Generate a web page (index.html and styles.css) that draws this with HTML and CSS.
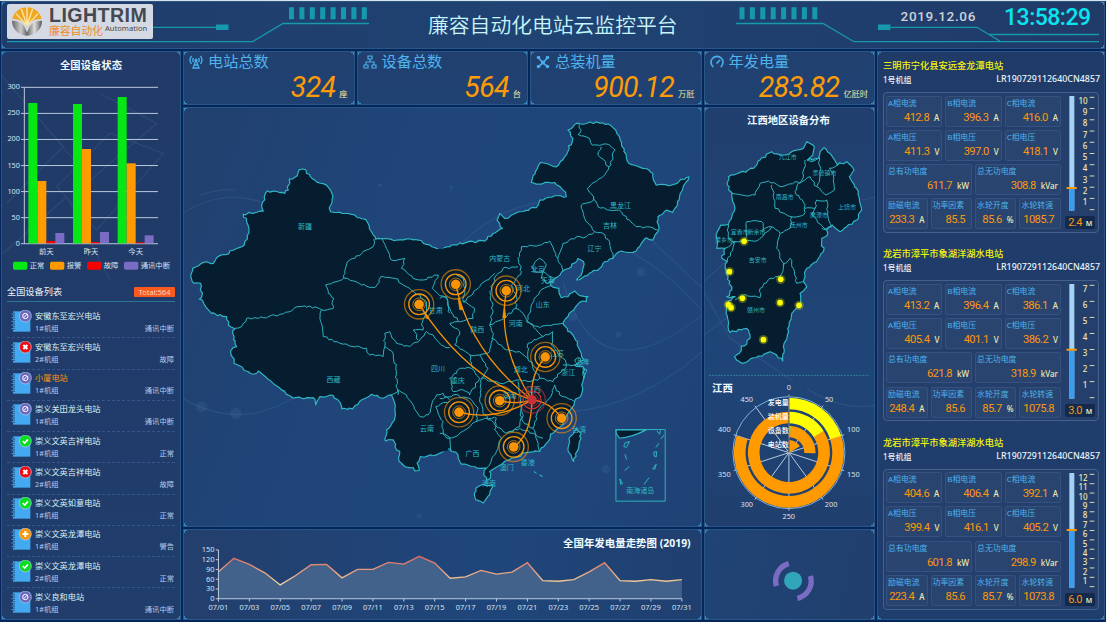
FILE: index.html
```html
<!DOCTYPE html>
<html lang="zh-CN">
<head>
<meta charset="utf-8">
<title>廉容自动化电站云监控平台</title>
<link rel="stylesheet" href="styles.css">
</head>
<body>
<main class="board">
  <header class="panel header">
    <svg class="header-lines" viewBox="0 0 1103 48">
      <g fill="none" stroke="#1799ad" stroke-width="1.3">
        <path d="M6 40.7H251.500L282 22.500H368"/>
        <path d="M6 33.700H105L124 26.300H215"/>
        <path d="M735 22.500H822L853 40.700H1098"/>
        <path d="M890 26.300H976L1000 40.700M988 33.500H1098"/>
      </g>
      <g fill="#1799ad">
        <rect x="215" y="23.500" width="12.500" height="5.500"/>
        <rect x="877" y="23.500" width="12.500" height="5.500"/>
      </g>
      <path d="M290.500 6.300V18.300M300.900 6.300V18.300M311.300 6.300V18.300M321.700 6.300V18.300M332.100 6.300V18.300M342.500 6.300V18.300M352.900 6.300V18.300M363.300 6.300V18.300M741 6.300V18.300M751.400 6.300V18.300M761.800 6.300V18.300M772.200 6.300V18.300M782.600 6.300V18.300M793 6.300V18.300M803.400 6.300V18.300M813.800 6.300V18.300" stroke="#1799ad" stroke-width="5"/>
    </svg>
    <div class="logo">
      <svg class="logo-mark" viewBox="0 0 90 90">
        <defs><linearGradient id="silver"><stop offset="0" stop-color="#666"/><stop offset=".3" stop-color="#ccc"/><stop offset=".5" stop-color="#666"/><stop offset=".75" stop-color="#ddd"/><stop offset="1" stop-color="#555"/></linearGradient></defs>
        <path d="M1 36A45 45 0 0 1 89 36Q58 34 45 60Q32 34 1 36Z" fill="#efa722"/>
        <path d="M45 56L12 20M45 56L28 5M45 56V0M45 56L62 5M45 56L78 20" stroke="#fbe7ac" stroke-width="4"/>
        <path d="M0 41Q34 39 45 76Q56 39 90 41A45 45 0 0 1 0 41Z" fill="url(#silver)"/>
      </svg>
      <div class="logo-text"><b>LIGHTRIM</b><div class="logo-sub"><span>廉容自动化</span><em>Automation</em></div></div>
    </div>
    <h1>廉容自动化电站云监控平台</h1>
    <div class="time"><span class="date">2019.12.06</span><span class="clock">13:58:29</span></div>
  </header>

  <aside class="panel left">
    <svg class="bars" id="bars" viewBox="3 3 540 690"></svg>
    <div class="list-head"><span>全国设备列表</span><span class="total">Total:564</span></div>
    <ul class="devices" id="devices"></ul>
  </aside>

  <section class="panel stat">
    <div class="stat-name"><svg viewBox="0 0 14 14"><g fill="none" stroke="#4aaeea" stroke-width="1.300"><path d="M4.500 3Q3 5 4.500 7M9.500 3Q11 5 9.500 7M2.500 1Q-.5 5 2.500 9M11.500 1Q14.500 5 11.500 9M7 5L4 13H10L7 5M5.500 10H8.500"/></g><circle cx="7" cy="5" r="1.600" fill="#4aaeea"/></svg>电站总数</div>
    <div class="stat-value"><b>324</b><i>座</i></div>
  </section>
  <section class="panel stat">
    <div class="stat-name"><svg viewBox="0 0 14 14"><path d="M5 1H9V4H5ZM1 10H5V13H1ZM9 10H13V13H9ZM7 4V7M3 10V7H11V10" fill="none" stroke="#4aaeea" stroke-width="1.200"/></svg>设备总数</div>
    <div class="stat-value"><b>564</b><i>台</i></div>
  </section>
  <section class="panel stat">
    <div class="stat-name"><svg viewBox="0 0 14 14"><path d="M2.500 2.500Q6 8 11.500 11.500M11.500 2.500Q8 8 2.500 11.500" fill="none" stroke="#4aaeea" stroke-width="1.500"/><g fill="#4aaeea"><circle cx="2.500" cy="2.500" r="1.800"/><circle cx="11.500" cy="2.500" r="1.800"/><circle cx="2.500" cy="11.500" r="1.800"/><circle cx="11.500" cy="11.500" r="1.800"/><circle cx="7" cy="7.500" r="2"/></g></svg>总装机量</div>
    <div class="stat-value"><b>900.12</b><i>万瓩</i></div>
  </section>
  <section class="panel stat">
    <div class="stat-name"><svg viewBox="0 0 14 14"><path d="M3.300 12A6 6 0 1 1 10.700 12M6.500 8.500L10 5" fill="none" stroke="#4aaeea" stroke-width="1.700"/></svg>年发电量</div>
    <div class="stat-value"><b>283.82</b><i>亿瓩时</i></div>
  </section>

  <section class="panel map"><svg id="china" viewBox="9 6 1557 1260"></svg></section>
  <section class="panel region"><svg id="region" viewBox="12 6 514 1260"></svg></section>
  <section class="panel trend"><svg id="trend" viewBox="9 12 1536 270"></svg></section>
  <section class="panel spin">
    <svg viewBox="12 477 514 273">
      <circle cx="279" cy="632" r="27" fill="#31a5ba"/>
      <path d="M229 648A53 53 0 0 1 266 581M331 618A53 53 0 0 1 292 685" fill="none" stroke="#7a6cc3" stroke-width="16"/>
    </svg>
  </section>
  <aside class="panel right" id="stations"></aside>
</main>
<script src="app.js"></script>
</body>
</html>
```

FILE: styles.css
```css
* { box-sizing: border-box; }
body {
  margin: 0; width: 1106px; height: 622px; overflow: hidden;
  background: #03265d; border-top: 1px solid #d8e4e8;
  font-family: "Noto Sans", "Noto Sans CJK SC", sans-serif; color: #e8f4fa;
}
.board {
  display: grid; padding-left: 1px; gap: 2px; width: 1105px;
  grid-template-columns: 180px repeat(4, 171.5px) 228px;
  grid-template-rows: 48px 54px 420px 91px;
}
.panel {
  --c: #3787b8;
  min-width: 0; min-height: 0; overflow: hidden; position: relative;
  background:
    linear-gradient(var(--c), var(--c)) 0 0 / 4px 2px, linear-gradient(var(--c), var(--c)) 0 0 / 2px 4px,
    linear-gradient(var(--c), var(--c)) 100% 0 / 4px 2px, linear-gradient(var(--c), var(--c)) 100% 0 / 2px 4px,
    linear-gradient(var(--c), var(--c)) 0 100% / 4px 2px, linear-gradient(var(--c), var(--c)) 0 100% / 2px 4px,
    linear-gradient(var(--c), var(--c)) 100% 100% / 4px 2px, linear-gradient(var(--c), var(--c)) 100% 100% / 2px 4px,
    var(--fill, linear-gradient(#213f6f, #20406f));
  background-repeat: no-repeat;
  box-shadow: inset 0 0 0 1px #2a5685;
}
.panel > svg { display: block; width: 100%; height: 100%; }
.header { grid-column: 1 / -1; display: flex; align-items: center; --fill: linear-gradient(90deg, #203c6a, #1f4373 50%, #203a68); }
.header > .header-lines { position: absolute; left: 0; top: 0; width: 1103px; height: 48px; }
.logo {
  position: relative; margin: -7px 0 0 6px; width: 146px; height: 35px; border-radius: 2px;
  background: rgba(222, 226, 235, .95); display: flex; align-items: center; padding-left: 5px; gap: 7px;
}
.logo-mark { width: 30px; height: 30px; flex: none; }
.logo-text b { display: block; font: bold 19.600px/18px "Liberation Sans", sans-serif; color: #444850; letter-spacing: .45px; margin-top: -1px; }
.logo-sub { display: flex; line-height: 12px; height: 13px; white-space: nowrap; }
.logo-sub span { font-size: 10.800px; color: #ef8b28; line-height: 14px; }
.logo-sub em { font: 7.600px/8px "Noto Sans", sans-serif; color: #444; margin-left: 2px; }
h1 {
  position: relative; margin: 0 0 0 275px; font-size: 20.800px; line-height: 28px; font-weight: 350; color: #c6f5fb; white-space: nowrap;
}
.time { position: relative; margin-left: auto; display: flex; gap: 28px; margin-right: 14px; margin-top: -14px; align-items: center; font-family: Roboto, sans-serif; }
.date { font-size: 13.500px; line-height: 16px; color: #cdd3d8; letter-spacing: .65px; margin-top: -4px; font-weight: 500; }
.clock { font-size: 23px; line-height: 24px; font-weight: 500; color: #0be4ef; letter-spacing: -.5px; width: 87px; }

.left { grid-row: 2 / 5; --fill: linear-gradient(#213a67, #203d6c); }
.left > .bars { height: 230px; }
.list-head { display: flex; justify-content: space-between; align-items: center; height: 21px; margin: 0 6px; border-bottom: 1px solid #2b7793; font-size: 9.200px; }
.list-head span { white-space: nowrap; }
.list-head .total { background: #fb591d; font-size: 7.500px; line-height: 10px; width: 41px; text-align: center; border-radius: 1px; color: #f5d9c0; margin-top: 2px; }
.devices { list-style: none; margin: 5px 6px 0; padding: 0; }
.devices li { display: flex; height: 31.250px; border-bottom: 1px dashed #36558a; padding: 2.500px 1px 0 4px; }
.devices li:last-child { border: 0; }
.devices svg { width: 22px; height: 24px; flex: none; }
.dev { flex: 1; margin-left: 2px; font-size: 8.200px; line-height: 13px; margin-top: -.8px; color: #d9f2f5; white-space: nowrap; }
.dev.warn b { color: #fb9310; }
.dev b { font-weight: 400; display: block; }
.dev div { display: flex; justify-content: space-between; font-size: 7.300px; line-height: 12px; color: #b3cbef; }

.stat { --fill: linear-gradient(#21406f, #1f4273); padding: 1px 7px 0 6px; }
.stat-name { display: flex; gap: 5px; align-items: center; color: #4eb3ef; font-size: 15.200px; line-height: 19px; white-space: nowrap; }
.stat-name svg { width: 14px; height: 14px; }
.stat-value { display: flex; justify-content: flex-end; align-items: baseline; gap: 4px; height: 29px; margin-top: 1px; color: #fd9b07; }
.stat-value b { font: italic 400 28.500px/32px Roboto, sans-serif; letter-spacing: -.7px; }
.stat-value i { font-style: normal; font-size: 8.200px; color: #eeeaa5; }

.map { grid-column: 2 / 5; --fill: linear-gradient(110deg, #21406e, #1f4579 35%, #1f467b 75%, #1f4275); }
.region { --fill: linear-gradient(#213f6e, #1f4578 60%, #203f6e); }
.trend { grid-column: 2 / 5; --fill: linear-gradient(90deg, #233f6d, #1f467b 60%, #203f6f); }
.spin { --fill: linear-gradient(100deg, #1f4475, #213f6e); }
.land { fill: #061d2f; stroke: #2fb8c5; stroke-width: 3.500; stroke-linejoin: round; }
.border { fill: none; stroke: #2fb3bf; stroke-width: 3; }
.deco { fill: none; stroke: #6fa3cc; stroke-opacity: .13; stroke-width: 4; }
.place { fill: #2fb8c5; font-size: 21px; text-anchor: middle; }
.place.small { font-size: 18px; }
.route { fill: none; stroke: #f49208; stroke-width: 4; }
.axis { fill: none; stroke: #b9cade; stroke-width: 3; }
.tick { fill: #d7e3f0; font-size: 22px; }
.tick.ring { fill: #fff; font-size: 21px; font-weight: 500; }
.mid { text-anchor: middle; }
.end { text-anchor: end; }
.title { fill: #f0fbff; font-size: 31px; font-weight: 700; }

.right { grid-column: 6; grid-row: 2 / 5; --fill: linear-gradient(#213b69, #1f3e6d); padding: 8px 6px 0; }
.station { height: 188.300px; }
.station h2 { margin: 0; font-size: 9.250px; line-height: 14px; font-weight: 500; color: #f5f40e; white-space: nowrap; }
.station .sub { display: flex; justify-content: space-between; font-size: 8px; line-height: 13px; font-weight: 500; white-space: nowrap; margin-bottom: 6px; }
.sub span + span { font-size: 8.850px; margin-right: -1px; }
.box { display: flex; gap: 4px; width: 215.500px; height: 141px; border: 1px solid #45618a; border-radius: 4px; padding: 2px; background: #243f6b; }
.cells { display: grid; width: 175px; grid-template-columns: repeat(12, 1fr); grid-template-rows: repeat(4, 31px); row-gap: 3.300px; column-gap: 3px; margin-top: .5px; }
.cell { grid-column: span 4; min-width: 0; border: 1px solid #35517f; border-radius: 2px; background: #29456f; padding: 0 2px 0 1px; white-space: nowrap; }
.cell.half { grid-column: span 6; }
.cell.quarter { grid-column: span 3; }
.cell span { display: block; font-size: 7.900px; line-height: 12px; color: #4bb1ef; }
.read { display: flex; justify-content: flex-end; align-items: baseline; gap: 5px; line-height: 17px; color: #fd960c; font-family: Roboto, sans-serif; font-size: 11.200px; letter-spacing: -.6px; }
.read u { text-decoration: none; font: 500 8px/10px "Noto Sans", sans-serif; color: #eeeab3; letter-spacing: 0; }
.quarter .read.none { padding-right: 4px; }
.gauge { width: 30px; }
.gauge svg { display: block; width: 30px; height: 121px; }
.level { display: flex; justify-content: center; align-items: baseline; gap: 4px; background: #15294d; border-radius: 2px; height: 13px; font: 11px/13px Roboto, sans-serif; color: #fd960c; letter-spacing: -.6px; }
.level u { text-decoration: none; font: 600 7px/8px "Noto Sans", sans-serif; color: #eeeab3; }
.scale { fill: #eeeab3; font-size: 24px; font-weight: 500; text-anchor: middle; }
```

FILE: app.js
```js
const $ = id => document.getElementById(id);

// Irregular border lines: every long segment is split and shifted a little.
let seed = 7;
const rnd = () => { seed = (seed * 16807) % 2147483647; return seed / 2147483647 - 0.5; };
function rough(str, amp = 7) {
  const closed = /z$/.test(str);
  const n = str.replace('z', '').trim().split(/[\s,]+/).map(Number);
  const p = [];
  for (let i = 0; i < n.length; i += 2) p.push([n[i], n[i + 1]]);
  if (closed) p.push(p[0]);
  let d = 'M' + p[0];
  for (let i = 1; i < p.length; i++) {
    const [a, b] = [p[i - 1], p[i]];
    const k = Math.max(1, Math.round(Math.hypot(b[0] - a[0], b[1] - a[1]) / 9));
    for (let j = 1; j < k; j++) {
      d += 'L' + (a[0] + (b[0] - a[0]) * j / k + rnd() * amp).toFixed(1) + ' ' + (a[1] + (b[1] - a[1]) * j / k + rnd() * amp).toFixed(1);
    }
    d += 'L' + b;
  }
  return d + (closed ? 'Z' : '');
}
const paths = (cls, list) => list.map(s => `<path class="${cls}" d="${rough(s)}"/>`).join('');
const label = (x, y, t, cls = 'place') => `<text class="${cls}" x="${x}" y="${y + 8}">${t}</text>`;

// Equipment status bars
let out = '<path class="deco" d="M3 75L190 290L20 460M60 140L230 340M170 410L330 250L490 310L290 540L170 410M300 130L470 220L260 400M10 610L200 440L330 690"/>';
out += label(273, 48, '全国设备状态', 'title mid');
[300, 250, 200, 150, 100, 50, 0].forEach((v, i) => {
  const y = 112 + i * 78.2;
  out += `<path class="axis" d="M63 ${y}H474"/>` + label(60, y - 2, v, 'tick end');
});
out += '<path class="axis" d="M73 112V581"/>';
const barColors = ['#06e816', '#ff9a00', '#fb0000', '#7a6cc3'];
[[85, '前天', [159, 393, 573, 549]], [219, '昨天', [162, 297, 576, 546]], [353, '今天', [141, 340, 577, 556]]].forEach(([x, name, ys]) => {
  ys.forEach((y, i) => { out += `<rect x="${x + i * 27}" y="${y}" width="27" height="${580 - y}" fill="${barColors[i]}"/>`; });
  out += label(x + 54, 603, name, 'tick mid');
});
[[39, '正常'], [150, '报警'], [261, '故障'], [372, '通讯中断']].forEach(([x, t], i) => {
  out += `<rect x="${x}" y="635" width="43" height="24" rx="5" fill="${barColors[i]}"/>` + label(x + 50, 646, t, 'tick');
});
$('bars').innerHTML = out;

// Device list
const marks = {
  '通讯中断': ['#6c68c0', '<circle cx="43" cy="17" r="8"/><path d="M38 22L48 12"/>'],
  '故障': ['#f00a14', '<path d="M37 11L49 23M49 11L37 23" stroke-width="6"/>'],
  '正常': ['#08dd20', '<path d="M35 17L41 23L51 12" stroke-width="5"/>'],
  '警告': ['#fb9608', '<path d="M43 8V26M34 17H52" stroke-width="6"/>']
};
$('devices').innerHTML = [
  ['安徽东至宏兴电站', 1, '通讯中断'], ['安徽东至宏兴电站', 2, '故障'], ['小厦电站', 1, '通讯中断'], ['崇义关田龙头电站', 1, '通讯中断'],
  ['崇义文英吉祥电站', 1, '正常'], ['崇义文英吉祥电站', 2, '故障'], ['崇义文英如意电站', 1, '正常'], ['崇义文英龙潭电站', 1, '警告'],
  ['崇义文英龙潭电站', 2, '正常'], ['崇义良和电站', 1, '通讯中断']
].map(([name, no, st]) => `<li><svg viewBox="0 0 66 72"><path d="M6 4H58V65H6Z" fill="#43aaf1"/><path d="M1 12H12M1 23H12M1 34H12M1 45H12M1 56H12" stroke="#203c6a" stroke-width="7"/><path d="M2 12H12M2 23H12M2 34H12M2 45H12M2 56H12" stroke="#43aaf1" stroke-width="3"/><circle cx="43" cy="18" r="18" fill="${marks[st][0]}" stroke="#b7cfe8" stroke-width="2"/><g fill="none" stroke="#fff" stroke-width="3" transform="translate(0 1)">${marks[st][1]}</g></svg><div class="dev${name === '小厦电站' ? ' warn' : ''}"><b>${name}</b><div><span>${no}#机组</span><span>${st}</span></div></div></li>`).join('');

// Country map: western half and eastern half (shifted by 780 units)
out = '<path class="deco" d="M0 330Q120 250 240 290M0 875Q170 980 340 880M60 270Q120 250 165 255M850 410Q1000 270 1180 290M1180 920Q1390 900 1580 730M1150 530Q1250 890 1580 620M1310 420Q1450 480 1580 630M1420 410L1580 560"/>';
out += '<g fill="#6fa3cc" fill-opacity=".1"><circle cx="65" cy="905" r="17"/><circle cx="168" cy="925" r="17"/><circle cx="1384" cy="501" r="13"/><circle cx="1180" cy="636" r="13"/><circle cx="1279" cy="1093" r="13"/><circle cx="718" cy="1233" r="8"/><circle cx="815" cy="247" r="6"/><circle cx="1316" cy="689" r="8"/><circle cx="601" cy="240" r="6"/></g>';
out += paths('land', ['810,437 770,430 740,418 715,405 690,401 650,405 607,401 587,402 575,380 562,350 540,338 515,328 452,320 448,308 457,290 456,265 440,240 405,225 380,205 378,194 357,194 352,212 328,222 325,255 315,265 262,257 245,305 250,318 190,328 200,350 207,382 193,420 110,458 100,475 80,470 38,490 32,512 42,535 62,535 66,570 58,582 95,625 140,635 145,660 165,672 158,685 170,725 152,738 162,775 220,808 235,798 300,850 340,880 400,878 408,900 420,875 460,872 482,895 486,912 518,912 545,885 575,868 610,880 635,870 643,890 645,940 620,975 617,1008 640,1005 650,1035 660,1040 658,1070 675,1085 700,1088 705,1098 718,1097 712,1075 722,1055 770,1050 790,1040']);
out += '<g transform="translate(780 0)">' + paths('land', [
  '0,434 30,425 80,412 135,408 160,385 188,370 172,345 180,325 195,340 240,320 290,308 300,285 345,272 380,275 378,262 345,232 290,237 275,232 302,172 350,185 375,155 400,100 385,75 405,58 440,55 470,50 515,62 540,95 568,175 620,190 640,205 650,240 695,240 748,215 730,250 720,275 700,322 680,315 655,335 655,380 640,405 620,398 600,425 580,442 545,438 520,460 490,475 480,490 410,525 428,500 432,470 415,460 395,485 370,498 345,520 330,530 335,542 358,550 365,578 385,575 405,558 420,572 445,575 440,590 420,592 395,620 370,655 400,690 425,745 432,765 405,780 430,785 435,810 430,830 425,870 405,890 385,925 370,960 340,985 300,1040 270,1042 215,1060 165,1090 150,1100 152,1120 140,1128 133,1105 140,1090 95,1085 65,1078 55,1050 35,1040 20,1030 0,1045',
  '108,1150 130,1138 158,1140 150,1170 130,1195 108,1185 104,1165z', '410,972 425,985 418,1020 402,1070 385,1035 388,1000z']) + '</g>';
out += '<path d="M760 434L805 428V1036L760 1045Z" fill="#061d2f"/>';
out += paths('border', [
  '165,670 185,665 200,640 250,638 300,628 330,620 345,608 390,603 425,614 458,612 462,580 445,565 437,540 492,519 503,470 525,460 560,435 580,425 582,402',
  '492,519 545,540 585,548 603,515 645,520 680,545 720,570 740,590 740,620 725,660 730,675 700,675 715,705',
  '607,401 620,430 635,465 675,460 665,490 700,520 730,525 775,510 758,550 780,572 800,580 810,625',
  '425,614 420,640 430,695 480,715 560,730 570,750 610,755 615,725 615,685 630,680 650,715 690,725 720,705 740,680 760,690 785,720 810,728',
  '615,725 640,745 648,790 652,850 655,870', '635,870 655,855 680,870 720,935 745,930 770,870 790,865 810,885', '810,890 768,905 775,925 790,950 790,985 812,1000']);
out += '<g transform="translate(780 0)">' + paths('border', [
  '418,58 425,75 415,88 450,100 458,120 508,118 527,135 508,185 490,215 443,250 462,275 455,290 425,300', '485,125 475,150 490,162 508,185',
  '462,275 475,305 510,315 540,315 570,345 590,365 625,365 655,375', '425,300 435,340 465,380 490,385 510,410 520,460',
  '465,380 440,395 410,395 370,415 355,460 370,498', '355,460 330,408 300,420 245,425 235,460 245,500 215,540 230,575 228,610 195,640 150,660 160,600 150,560 170,510 190,490 235,485',
  '275,485 300,460 320,480 310,500 285,500z', '310,500 335,515 325,535 305,520z', '165,505 120,545 70,590 105,610 100,640 55,650 30,655 60,680 45,720 90,750 120,750 150,740 160,690 150,660',
  '50,510 70,520 75,550 70,590', '0,580 20,575 30,610 55,650', '155,700 200,735 240,740 265,760 265,715 310,695 270,655 250,625 228,610', '260,650 275,600 300,560 335,542', '260,650 300,668 370,655',
  '310,695 340,680 335,720 370,760 380,785 340,830 300,820 265,760', '370,780 405,780', '120,750 145,790 125,820 180,835 240,825 265,830 300,820',
  '30,820 60,790 95,790 120,820 90,870 70,855 40,860z', '90,750 100,790', '125,820 120,880 135,930 165,960 200,985 240,965 245,900 235,830',
  '245,900 250,950 280,970 300,910 330,880 345,840 360,870 405,890', '280,970 300,1040', '0,880 40,870 90,880 115,910 110,950 60,985 30,1000 0,985', '30,1000 35,1040',
  '110,950 135,940 170,940 165,975 185,1000 170,1040 140,1090', '200,985 240,970 280,985 310,1000',
  '405,765 415,758 430,775 418,785z', '430,790 442,795 434,820z', '283,1100 290,1105z', '300,1110 308,1115z']);
out += '<path class="land" d="M529 975H620Q575 998 540 1000L530 985Z"/><path class="border" stroke-width="4" d="M529 974H677V1189H529ZM555 1015L570 1010L560 1028L553 1025ZM556 1048L561 1064M555 1097L569 1085M541 1122L549 1136L543 1138ZM613 1139L629 1118M639 1092L650 1078L646 1093ZM643 1042L651 1040L650 1056L644 1054ZM649 1028L658 1015M652 978L660 988L663 977M664 1003L674 990"/>';
[[543, 301, '黑龙江'], [511, 362, '吉林'], [465, 430, '辽宁'], [180, 461, '内蒙古'], [295, 492, '北京'], [325, 527, '天津'], [250, 551, '河北'], [309, 597, '山东'], [228, 656, '河南'], [113, 673, '陕西'], [352, 744, '江苏'], [243, 794, '湖北'], [386, 803, '浙江'], [54, 826, '重庆'], [282, 853, '江西'], [210, 870, '湖南'], [418, 972, '台湾'], [98, 1044, '广西'], [264, 1072, '香港'], [201, 1088, '澳门'], [148, 1134, '海南'], [602, 1158, '南海诸岛'], [427, 770, '上海'],
 [-405, 364, '新疆'], [-319, 822, '西藏'], [-38, 971, '云南'], [-5, 789, '四川'], [-12, 615, '甘肃']].forEach(a => { out += label(...a); });
out += '<path class="route" d="M277 885Q80 820 -62 598M277 885Q90 740 48 538M277 885Q170 720 200 557M277 885Q270 810 317 756M277 885Q230 900 180 887M277 885Q170 950 58 922M277 885Q330 890 366 940M277 885Q275 990 222 1026"/>';
out += '<path d="M-50 618L-38 642L-32 638ZM55 580L60 614L70 614ZM194 605L189 638L199 638Z" fill="#f49208" stroke="#f49208" stroke-width="2"/>';
[[-62, 598], [48, 538], [200, 557], [317, 756], [180, 887], [58, 922], [366, 940], [222, 1026], [277, 885]].forEach(([x, y], i) => {
  const c = i === 8 ? '#c93138' : '#f89406';
  out += `<g fill="none" stroke="${c}"><circle cx="${x}" cy="${y}" r="14" fill="${c}"/><circle cx="${x}" cy="${y}" r="19" stroke-width="2"/><circle cx="${x}" cy="${y}" r="${i === 8 ? 27 : 31}" stroke-width="4"/><circle cx="${x}" cy="${y}" r="${i === 8 ? 40 : 44}" stroke-width="4" stroke-opacity=".6"/></g>`;
});
$('china').innerHTML = out + '</g>';

// Province map and polar chart
out = '<path class="deco" d="M0 540L120 430M0 700L180 560M0 540L90 700L280 830M485 285L540 275M320 850Q420 920 540 900"/>' + label(265, 50, '江西地区设备分布', 'title mid');
out += paths('land', ['320,110 343,125 338,150 322,165 355,160 360,140 372,128 390,145 412,180 440,170 462,195 448,215 475,260 485,315 470,345 420,380 397,360 380,375 382,390 365,400 370,440 350,470 320,490 310,530 320,545 300,565 300,600 275,625 262,690 250,725 248,768 210,740 125,775 103,755 150,700 140,670 90,683 78,625 78,595 105,575 80,575 95,555 75,490 82,470 65,460 75,430 50,430 48,390 62,360 85,358 105,310 95,270 82,240 85,215 160,190 180,165 215,140 250,150 310,130z']);
out += paths('border', ['95,265 125,270 165,270 180,235 205,228 240,245 285,230 300,235 310,210 315,165', '215,240 225,290 225,310 275,335 310,330 315,300 285,260 295,235', '315,310 345,310 350,285 380,285 385,340 395,365 375,372 335,330 345,310',
  '358,155 360,210 350,245 378,270 403,255 400,210 388,190 412,180', '275,335 270,370 240,385 215,365 175,405 135,410', '135,410 140,350 185,350 190,375 215,365', '240,385 230,430 250,485 270,460 280,490 290,535 310,530', '250,485 240,515 210,520 180,550 180,578 130,570 105,585', '85,358 85,400 105,410 75,430', '105,410 135,410', '105,410 82,470', '365,370 380,375', '320,165 335,170 355,160', '295,235 330,215 350,245']);
[[263, 153, '九江市'], [373, 203, '景德镇市'], [254, 275, '南昌市'], [441, 303, '上饶市'], [357, 327, '鹰潭市'], [296, 358, '抚州市'], [119, 380, '宜春市'], [169, 380, '新余市'], [72, 402, '萍乡市'], [173, 463, '吉安市'], [168, 614, '赣州市']].forEach(([x, y, t]) => { out += label(x, y, t, 'place small'); });
[[132, 409], [88, 500], [242, 523], [127, 580], [85, 599], [93, 608], [240, 593], [297, 601], [190, 704]].forEach(([x, y]) => { out += `<circle cx="${x}" cy="${y}" r="14" fill="#e8f000" opacity=".3"/><circle cx="${x}" cy="${y}" r="8.500" fill="#ff0"/>`; });
out += '<g transform="translate(0 795)"><path d="M27 16H507" stroke="#2e7f98" stroke-width="3" stroke-dasharray="6 3"/>' + label(67, 58, '江西', 'title mid');
const cx = 266.5, cy = 248;
const pt = (r, a) => [cx + r * Math.sin(a * Math.PI / 180), cy - r * Math.cos(a * Math.PI / 180)].map(v => v.toFixed(1)).join(' ');
for (let i = 0; i < 10; i++) out += `<path class="axis" d="M${cx} ${cy}L${pt(174, i * 36)}"/>`;
const arc = (r0, r1, a0, a1, c) => {
  const m = (a0 + a1) / 2;
  out += `<path fill="${c}" d="M${pt(r1, a0)}A${r1} ${r1} 0 0 1 ${pt(r1, m)}A${r1} ${r1} 0 0 1 ${pt(r1, a1)}L${pt(r0, a1)}A${r0} ${r0} 0 0 0 ${pt(r0, m)}A${r0} ${r0} 0 0 0 ${pt(r0, a0)}Z"/>`;
};
arc(130, 165, 72, 288, '#ff9a00'); arc(130, 165, 0, 72, '#ff0');
arc(88, 123, 58, 360, '#ff9a00'); arc(88, 123, 0, 58, '#ff0');
arc(46, 80, 4, 91, '#ff9a00'); arc(46, 80, 0, 4, '#ff0'); arc(0.1, 38, 0, 60, '#ff9a00');
out += `<circle cx="${cx}" cy="${cy}" r="168" fill="none" stroke="#7fb3dd" stroke-width="3"/><path d="M${cx} 78V248" stroke="#344457" stroke-width="3"/>`;
[[266, 52, 0], [387, 88, 50], [460, 179, 100], [460, 312, 150], [393, 404, 200], [266, 440, 250], [140, 404, 300], [73, 312, 350], [73, 179, 400], [140, 88, 450]].forEach(([x, y, t]) => { out += label(x, y, t, 'tick mid'); });
['发电量', '装机量', '设备数', '电站数'].forEach((t, i) => { out += label(266, 98 + i * 42, t, 'tick ring end'); });
$('region').innerHTML = out + '</g>';

// Daily generation trend
const ys = [139, 99, 117, 142, 178, 150, 118, 117, 157, 132, 132, 111, 116, 93, 113, 158, 154, 135, 146, 140, 112, 165, 167, 162, 139, 112, 165, 167, 162, 167, 162];
const line = ys.map((y, i) => `${(113 + i * 45.83).toFixed(1)},${y}`).join(' ');
out = '<defs><linearGradient id="heat" gradientUnits="userSpaceOnUse" x1="0" y1="93" x2="0" y2="180"><stop offset="0" stop-color="#dc665e"/><stop offset="1" stop-color="#f5d99f"/></linearGradient></defs>';
out += `<polygon points="113,219 ${line} 1488,219" fill="#42628c"/><polyline points="${line}" fill="none" stroke="url(#heat)" stroke-width="4"/><path class="axis" d="M113 74V219H1488"/>`;
[150, 120, 90, 60, 30, 0].forEach((v, i) => { const y = 74 + i * 29; out += `<path class="axis" d="M105 ${y}H113"/>` + label(101, y - 1, v, 'tick end'); });
for (let d = 1; d < 32; d += 2) { const x = 113 + (d - 1) * 45.83; out += `<path class="axis" d="M${x} 219V227"/>` + label(x, 244, '07/' + String(d).padStart(2, '0'), 'tick mid'); }
$('trend').innerHTML = out + label(1514, 57, '全国年发电量走势图 (2019)', 'title end');

// Station cards
const stations = [
  ['三明市宁化县安远金龙潭电站', ['412.8', '396.3', '416.0', '411.3', '397.0', '418.1', '611.7', '308.8', '233.3', '85.5', '85.6', '1085.7'], 10, 276, '2.4'],
  ['龙岩市漳平市象湖洋湖水电站', ['413.2', '396.4', '386.1', '405.4', '401.1', '386.2', '621.8', '318.9', '248.4', '85.6', '85.7', '1075.8'], 7, 197, '3.0'],
  ['龙岩市漳平市象湖洋湖水电站', ['404.6', '406.4', '392.1', '399.4', '416.1', '405.2', '601.8', '298.9', '223.4', '85.6', '85.7', '1073.8'], 12, 171, '6.0']
];
const names = ['A相电流', 'B相电流', 'C相电流', 'A相电压', 'B相电压', 'C相电压', '总有功电度', '总无功电度', '励磁电流', '功率因素', '水轮开度', '水轮转速'];
const units = ['A', 'A', 'A', 'V', 'V', 'V', 'kW', 'kVar', 'A', '', '%', ''];
$('stations').innerHTML = stations.map(([name, vals, max, lvl, val]) => {
  let g = `<rect x="13" y="3" width="15" height="344" fill="#a4d2f4"/><rect x="13" y="${lvl + 3}" width="15" height="${344 - lvl}" fill="#3b9df0"/><rect x="4" y="${lvl}" width="32" height="6" rx="3" fill="#ff9a00"/>`;
  for (let i = 0; i <= max; i++) {
    const y = 344 - i * 337 / max;
    g += `<path d="M74 ${y}H88" stroke="#d9dba9" stroke-width="3"/>`;
    if (i) g += label(i > 9 ? 54 : 60, y + 12, i, 'scale');
  }
  const cells = names.map((n, i) => `<div class="cell${i > 7 ? ' quarter' : i > 5 ? ' half' : ''}"><span>${n}</span><div class="read${units[i] ? '' : ' none'}">${vals[i]}${units[i] ? `<u>${units[i]}</u>` : ''}</div></div>`).join('');
  return `<section class="station"><h2>${name}</h2><div class="sub"><span>1号机组</span><span>LR190729112640CN4857</span></div><div class="box"><div class="cells">${cells}</div><div class="gauge"><svg viewBox="0 0 90 363">${g}</svg><div class="level">${val}<u>M</u></div></div></div></section>`;
}).join('');
```
